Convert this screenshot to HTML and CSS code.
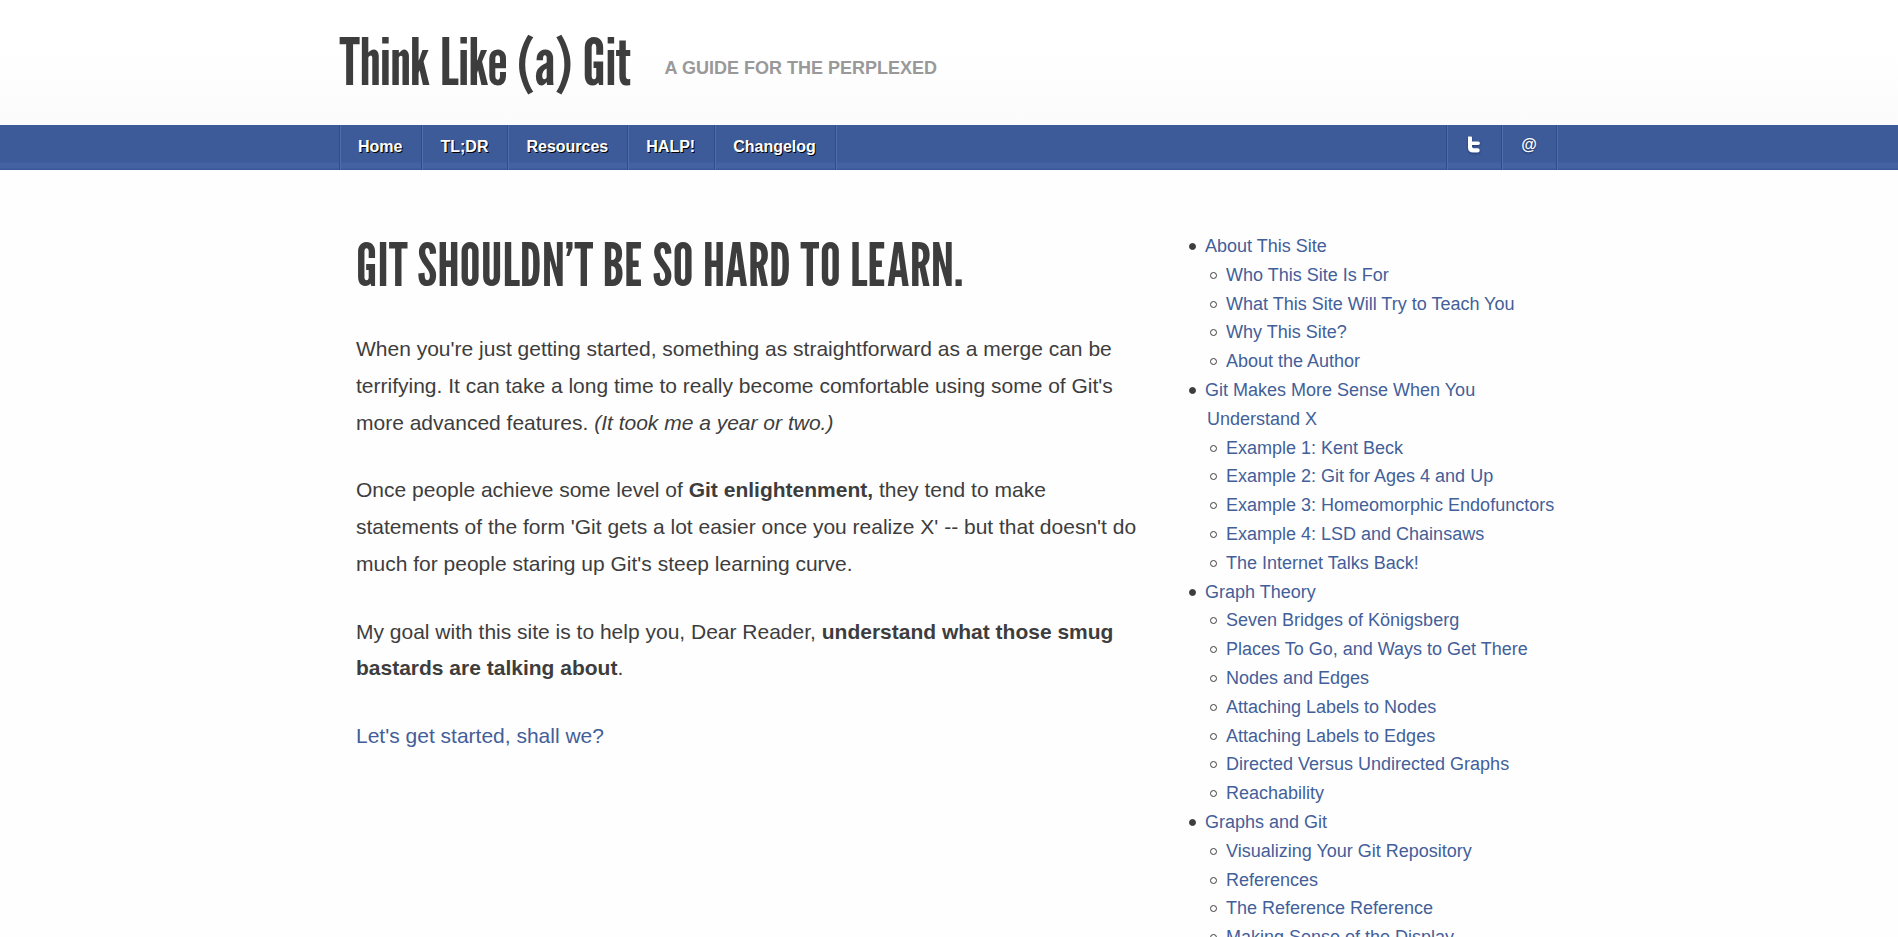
FILE: index.html
```html
<!DOCTYPE html>
<html lang="en">
<head>
<meta charset="utf-8">
<meta name="viewport" content="width=device-width, initial-scale=1">
<title>Think Like (a) Git</title>
<link rel="stylesheet" href="styles.css">
</head>
<body>
<header class="masthead">
  <div class="wrap masthead-row">
    <p class="site-title">Think Like (a) Git</p>
    <p class="tagline">A guide for the perplexed</p>
  </div>
</header>
<nav class="navbar" aria-label="Main">
  <div class="wrap navbar-row">
    <ul class="menu">
      <li><a href="#home">Home</a></li>
      <li><a href="#tldr">TL;DR</a></li>
      <li><a href="#resources">Resources</a></li>
      <li><a href="#halp">HALP!</a></li>
      <li><a href="#changelog">Changelog</a></li>
    </ul>
    <ul class="menu menu-social">
      <li><a href="#twitter" aria-label="Twitter"><svg class="icon" viewBox="0 0 16 18" aria-hidden="true"><path d="M2 .5h3q1 0 1 1v4h6.200a1.700 1.700 0 0 1 0 3.500H6v1.500q0 1.700 1.700 1.700h4.300a2.200 2.200 0 0 1 0 4.300H7q-5 0-5-5z"/></svg></a></li>
      <li><a class="at" href="#contact" aria-label="Email">@</a></li>
    </ul>
  </div>
</nav>
<div class="wrap page">
  <main class="article">
    <h1>Git shouldn’t be so hard to learn.</h1>
    <p>When you're just getting started, something as straightforward as a merge can be terrifying. It can take a long time to really become comfortable using some of Git's more advanced features. <em>(It took me a year or two.)</em></p>
    <p>Once people achieve some level of <strong>Git enlightenment,</strong> they tend to make statements of the form 'Git gets a lot easier once you realize X' -- but that doesn't do much for people staring up Git's steep learning curve.</p>
    <p>My goal with this site is to help you, Dear Reader, <strong>understand what those smug bastards are talking about</strong>.</p>
    <p><a href="#start">Let's get started, shall we?</a></p>
  </main>
  <aside class="sidebar">
    <ul class="toc">
      <li><a href="#about">About This Site</a>
        <ul>
          <li><a href="#who">Who This Site Is For</a></li>
          <li><a href="#what">What This Site Will Try to Teach You</a></li>
          <li><a href="#why">Why This Site?</a></li>
          <li><a href="#author">About the Author</a></li>
        </ul>
      </li>
      <li><a href="#sense">Git Makes More Sense When You Understand X</a>
        <ul>
          <li><a href="#ex1">Example 1: Kent Beck</a></li>
          <li><a href="#ex2">Example 2: Git for Ages 4 and Up</a></li>
          <li><a href="#ex3">Example 3: Homeomorphic Endofunctors</a></li>
          <li><a href="#ex4">Example 4: LSD and Chainsaws</a></li>
          <li><a href="#internet">The Internet Talks Back!</a></li>
        </ul>
      </li>
      <li><a href="#theory">Graph Theory</a>
        <ul>
          <li><a href="#bridges">Seven Bridges of Königsberg</a></li>
          <li><a href="#places">Places To Go, and Ways to Get There</a></li>
          <li><a href="#nodes">Nodes and Edges</a></li>
          <li><a href="#label-nodes">Attaching Labels to Nodes</a></li>
          <li><a href="#label-edges">Attaching Labels to Edges</a></li>
          <li><a href="#directed">Directed Versus Undirected Graphs</a></li>
          <li><a href="#reachability">Reachability</a></li>
        </ul>
      </li>
      <li><a href="#graphs-git">Graphs and Git</a>
        <ul>
          <li><a href="#visualizing">Visualizing Your Git Repository</a></li>
          <li><a href="#references">References</a></li>
          <li><a href="#reference-reference">The Reference Reference</a></li>
          <li><a href="#display">Making Sense of the Display</a></li>
        </ul>
      </li>
    </ul>
  </aside>
</div>
</body>
</html>
```
FILE: styles.css
```css
*,
*::before { box-sizing: border-box; }

body {
  margin: 0;
  background: #fefefe;
  color: #3d3d3d;
  font-family: "Liberation Sans", Arial, sans-serif;
  font-size: 21px;
}

a { color: #435f99; text-decoration: none; }
a:hover { text-decoration: underline; }

.wrap { max-width: 1220px; margin: 0 auto; }

.masthead { background: linear-gradient(#fff 40%, #fbfbfb); }
.masthead-row {
  display: flex;
  align-items: center;
  gap: 34px;
  height: 125px;
  padding-bottom: 2px;
}
.site-title,
.article h1 {
  margin: 0;
  font-family: "League Gothic", "Liberation Sans Narrow", "Liberation Sans", sans-serif;
  font-weight: normal;
  line-height: 64px;
}
.site-title { font-size: 64px; }
.tagline {
  margin: 0;
  padding-top: 14px;
  color: #999;
  font-size: 18px;
  font-weight: bold;
  text-transform: uppercase;
}

.navbar {
  background: linear-gradient(#3d5b99 0 37px, #4461a1 38px 43px, #3a579a 44px);
}
.navbar-row {
  display: flex;
  justify-content: space-between;
  padding-right: 2px;
}
.menu {
  display: flex;
  margin: 0;
  padding: 0;
  list-style: none;
  border-right: 1px solid #2f4c8c;
  box-shadow: 1px 0 #4f6cab;
}
.menu a {
  display: flex;
  align-items: center;
  height: 45px;
  padding: 0 19px 2px 18px;
  border-left: 1px solid #2f4c8c;
  box-shadow: inset 1px 0 #4f6cab;
  color: #fff;
  font-size: 16px;
  font-weight: bold;
  text-shadow: 1px 1px 0 #000;
}
.menu-social a {
  justify-content: center;
  width: 55px;
  padding: 0 0 6px;
}
.menu-social .at { text-shadow: 0 1px 2px #1c2f60; }
.icon {
  width: 16px;
  height: 18px;
  fill: #fff;
  filter: drop-shadow(0 1px 1px #22386e);
}

.page {
  display: flex;
  justify-content: space-between;
  padding: 62px 0 0 17px;
}
.article { flex: 0 1 790px; }
.article h1 {
  margin-bottom: 33px;
  font-size: 59px;
  line-height: 66px;
  text-transform: uppercase;
}
.article p { margin: 0 0 31px; line-height: 1.75; }

.sidebar { flex: 0 0 370px; }
.toc { font-size: 18px; line-height: 1.6; }
.toc,
.toc ul { margin: 0; padding-left: 18px; list-style: none; }
.toc ul { padding-left: 21px; }
.toc li::before {
  content: "";
  display: inline-block;
  width: 7px;
  height: 7px;
  margin: 0 9px 0 -18px;
  border: 1px solid #3d3d3d;
  border-radius: 50%;
  background: #3d3d3d;
  vertical-align: 2px;
}
.toc ul li::before { background: none; }
```
